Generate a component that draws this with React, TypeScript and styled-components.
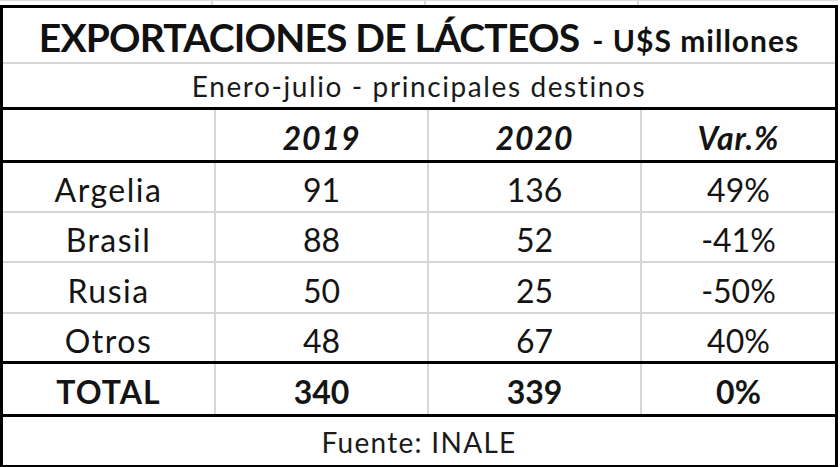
import React from "react";
import styled, { createGlobalStyle } from "styled-components";

const GlobalStyle = createGlobalStyle`
  html, body {
    margin: 0;
    padding: 0;
    background: #ffffff;
  }
  body {
    font-family: Lato, "Open Sans", "Liberation Sans", sans-serif;
    color: #141414;
  }
`;

type Row = { name: string; y2019: string; y2020: string; diff: string };

const rows: Row[] = [
  { name: "Argelia", y2019: "91", y2020: "136", diff: "49%" },
  { name: "Brasil", y2019: "88", y2020: "52", diff: "-41%" },
  { name: "Rusia", y2019: "50", y2020: "25", diff: "-50%" },
  { name: "Otros", y2019: "48", y2020: "67", diff: "40%" },
];

const rowHeights = [48, 48, 49, 47];

const App: React.FC = () => {
  return (
    <>
      <GlobalStyle />
      <Sheet>
        <GridStrip>
          <StripCell />
          <StripCell />
          <StripCell />
          <StripCell $last />
        </GridStrip>
        <Table>
          <TitleRow>
            <Title>
              EXPORTACIONES DE LÁCTEOS<Unit>- U$S millones</Unit>
            </Title>
          </TitleRow>
          <SubtitleRow>Enero-julio - principales destinos</SubtitleRow>
          <Row $height={50} $thick>
            <Cell />
            <HeadCell>2019</HeadCell>
            <HeadCell>2020</HeadCell>
            <HeadCell $last>Var.%</HeadCell>
          </Row>
          {rows.map((r, i) => (
            <Row
              key={r.name}
              $height={rowHeights[i]}
              $thick={i === rows.length - 1}
            >
              <Cell $label>{r.name}</Cell>
              <Cell>{r.y2019}</Cell>
              <Cell>{r.y2020}</Cell>
              <Cell $last>{r.diff}</Cell>
            </Row>
          ))}
          <Row $height={50} $thick>
            <Cell $bold $label>
              TOTAL
            </Cell>
            <Cell $bold>340</Cell>
            <Cell $bold>339</Cell>
            <Cell $bold $last>
              0%
            </Cell>
          </Row>
          <SourceRow>Fuente: INALE</SourceRow>
        </Table>
      </Sheet>
    </>
  );
};

export default App;

const Sheet = styled.div`
  width: 840px;
  height: 467px;
  overflow: hidden;
  background: #ffffff;
`;

const GridStrip = styled.div`
  display: flex;
  height: 5px;
  width: 838px;
  border-top: 1px solid #dadada;
  box-sizing: border-box;
`;

const StripCell = styled.div<{ $last?: boolean }>`
  width: ${(p) => (p.$last ? "auto" : "213px")};
  flex: ${(p) => (p.$last ? "1" : "none")};
  border-right: ${(p) => (p.$last ? "none" : "2px solid #dadada")};
  box-sizing: border-box;
`;

const Table = styled.div`
  width: 838px;
  border: 3px solid #000000;
  box-sizing: border-box;
  display: flex;
  flex-direction: column;
`;

const TitleRow = styled.div`
  height: 56px;
  border-bottom: 2px solid #d6d6d6;
  box-sizing: border-box;
  display: flex;
  align-items: center;
  justify-content: center;
  padding-top: 4px;
`;

const Title = styled.div`
  display: flex;
  align-items: baseline;
  font-weight: 700;
  font-size: 39px;
  letter-spacing: -0.8px;
  white-space: nowrap;
  color: #111111;
`;

const Unit = styled.span`
  margin-left: 13px;
  font-size: 30px;
  letter-spacing: 1px;
`;

const SubtitleRow = styled.div`
  height: 46px;
  border-bottom: 3px solid #000000;
  box-sizing: border-box;
  display: flex;
  align-items: center;
  justify-content: center;
  font-size: 28px;
  letter-spacing: 1.6px;
  padding-top: 1px;
  color: #1a1a1a;
`;

const Row = styled.div<{ $height: number; $thick?: boolean }>`
  display: flex;
  height: ${(p) => p.$height + (p.$thick ? 3 : 2)}px;
  border-bottom: ${(p) => (p.$thick ? "3px solid #000000" : "2px solid #d6d6d6")};
  box-sizing: border-box;
`;

const Cell = styled.div<{ $last?: boolean; $bold?: boolean; $label?: boolean }>`
  width: ${(p) => (p.$last ? "auto" : "213px")};
  flex: ${(p) => (p.$last ? "1" : "none")};
  border-right: ${(p) => (p.$last ? "none" : "2px solid #d6d6d6")};
  box-sizing: border-box;
  display: flex;
  align-items: center;
  justify-content: center;
  padding-top: 5px;
  font-size: 32px;
  font-weight: ${(p) => (p.$bold ? 700 : 400)};
  letter-spacing: ${(p) => (p.$label ? (p.$bold ? "1px" : "1.5px") : "0")};
  color: #141414;
`;

const HeadCell = styled(Cell)`
  font-weight: 700;
  font-style: italic;
  letter-spacing: 1px;
`;

const SourceRow = styled.div`
  height: 47px;
  display: flex;
  align-items: center;
  justify-content: center;
  font-size: 28px;
  letter-spacing: 1.3px;
  padding-top: 1px;
  color: #1a1a1a;
`;
